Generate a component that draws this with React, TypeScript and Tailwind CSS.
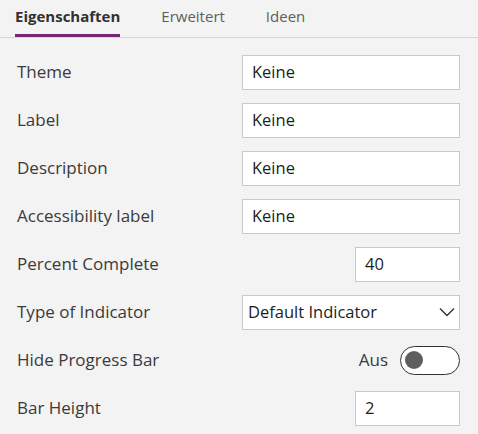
import { useState } from 'react';

const font = { fontFamily: '"Open Sans", "Noto Sans", sans-serif' };

function TextBox({ value, wide = true }: { value: string; wide?: boolean }) {
  return (
    <div
      className={`h-[35px] ${wide ? 'w-[218px]' : 'w-[105px]'} bg-white border border-[#c8c8c8] flex items-center pl-[9px] text-[16.5px] text-[#201f1e]`}
    >
      {value}
    </div>
  );
}

function Row({ label, children }: { label: string; children: React.ReactNode }) {
  return (
    <div className="h-12 flex items-center justify-between pl-[17px] pr-[18px]">
      <span className="text-[17px] text-[#3b3a39]">{label}</span>
      {children}
    </div>
  );
}

export default function App() {
  const [tab, setTab] = useState('Eigenschaften');
  const [hidden, setHidden] = useState(false);
  const tabs = ['Eigenschaften', 'Erweitert', 'Ideen'];

  return (
    <div className="w-[478px] h-[434px] bg-[#f3f3f3] overflow-hidden" style={font}>
      <div className="h-[38px] border-b border-[#d6d6d6] flex items-end pl-[15px] gap-[41px]">
        {tabs.map(t => (
          <button
            key={t}
            onClick={() => setTab(t)}
            className={`h-full flex flex-col justify-end text-[15px] leading-none ${
              t === tab ? 'font-bold text-[#323130]' : 'text-[#605e5c]'
            }`}
          >
            <span className="pb-[10px]">{t}</span>
            <span className={`h-[3px] w-full ${t === tab ? 'bg-[#742774]' : 'bg-transparent'}`} />
          </button>
        ))}
      </div>

      <div className="pt-[10px]">
        <Row label="Theme"><TextBox value="Keine" /></Row>
        <Row label="Label"><TextBox value="Keine" /></Row>
        <Row label="Description"><TextBox value="Keine" /></Row>
        <Row label="Accessibility label"><TextBox value="Keine" /></Row>
        <Row label="Percent Complete"><TextBox value="40" wide={false} /></Row>
        <Row label="Type of Indicator">
          <div className="h-[35px] w-[218px] bg-white border border-[#c8c8c8] flex items-center justify-between pl-[5px] pr-[3px] text-[16.5px] text-[#201f1e]">
            <span>Default Indicator</span>
            <svg width="18" height="18" viewBox="0 0 18 18" fill="none">
              <path d="M2 5.5 L9 12.5 L16 5.5" stroke="#333" strokeWidth="1.4" />
            </svg>
          </div>
        </Row>
        <Row label="Hide Progress Bar">
          <div className="flex items-center gap-[12px]">
            <span className="text-[17px] text-[#3b3a39]">{hidden ? 'Ein' : 'Aus'}</span>
            <button
              onClick={() => setHidden(h => !h)}
              className="w-[60px] h-[29px] rounded-full border border-[#333] bg-white flex items-center px-[3px]"
            >
              <span className="w-[18px] h-[18px] rounded-full bg-[#605e5c] ml-[1px]" />
            </button>
          </div>
        </Row>
        <Row label="Bar Height"><TextBox value="2" wide={false} /></Row>
      </div>
    </div>
  );
}
